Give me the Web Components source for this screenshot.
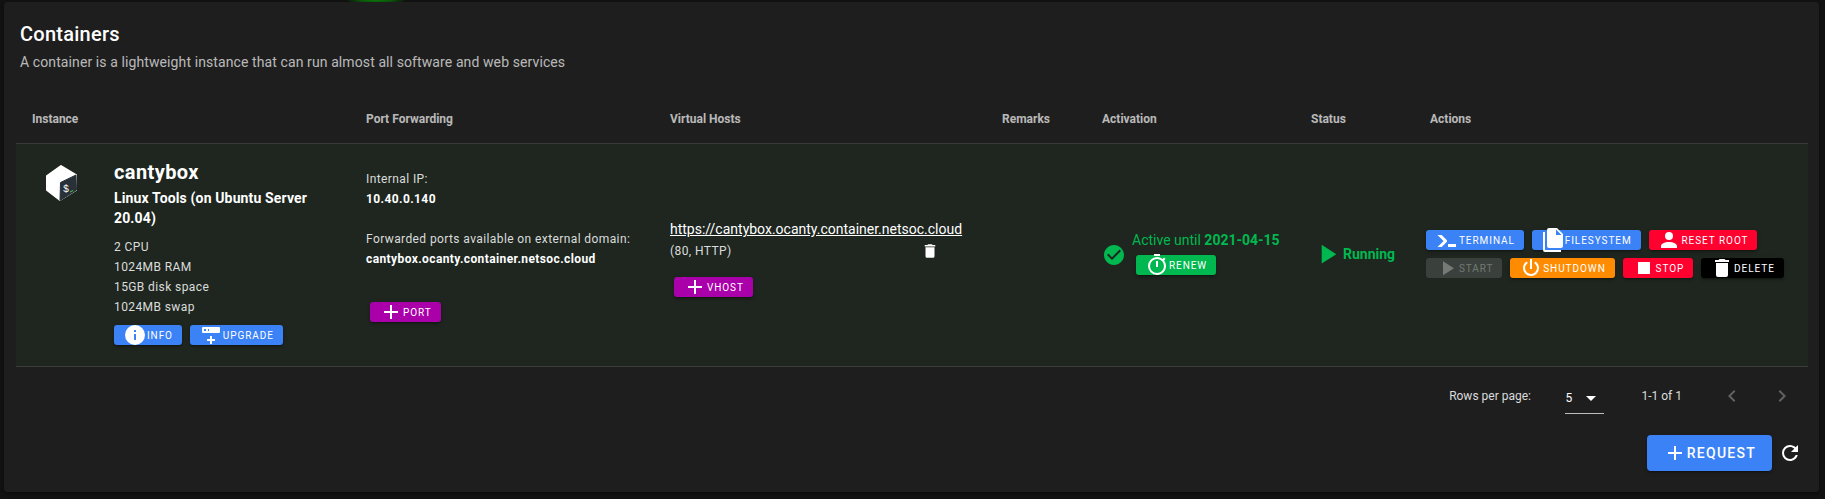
<!DOCTYPE html>
<html>
<head>
<meta charset="utf-8">
<title>Containers</title>
<style>
html, body { margin: 0; height: 499px; overflow: hidden; }
body {
    background: radial-gradient(ellipse 30px 5px at 376px 0, #0b7a0b 0, #0b5a0b 50%, transparent 100%), #121212;
    font-family: Roboto, "Liberation Sans", sans-serif;
    color: #fff;
}
</style>
</head>
<body>
<containers-page></containers-page>

<script>
const ICONS = {
    plus: "M19,13H13V19H11V13H5V11H11V5H13V11H19V13Z",
    info: "M13,9H11V7H13M13,17H11V11H13M12,2A10,10 0 0,0 2,12A10,10 0 0,0 12,22A10,10 0 0,0 22,12A10,10 0 0,0 12,2Z",
    upgrade: "M4,4H20A1,1 0 0,1 21,5V9A1,1 0 0,1 20,10H4A1,1 0 0,1 3,9V5A1,1 0 0,1 4,4M9,8H10V6H9V8M5,6V8H7V6H5M8,16H11V13H13V16H16V18H13V21H11V18H8V16Z",
    trash: "M19,4H15.5L14.5,3H9.5L8.5,4H5V6H19M6,19A2,2 0 0,0 8,21H16A2,2 0 0,0 18,19V7H6V19Z",
    check: "M12 2C6.5 2 2 6.5 2 12S6.5 22 12 22 22 17.5 22 12 17.5 2 12 2M10 17L5 12L6.41 10.59L10 14.17L17.59 6.58L19 8L10 17Z",
    timer: "M12,20A7,7 0 0,1 5,13A7,7 0 0,1 12,6A7,7 0 0,1 19,13A7,7 0 0,1 12,20M19.03,7.39L20.45,5.97C20,5.46 19.55,5 19.04,4.56L17.62,6C16.07,4.74 14.12,4 12,4A9,9 0 0,0 3,13A9,9 0 0,0 12,22C17,22 21,17.97 21,13C21,10.88 20.26,8.93 19.03,7.39M11,14H13V8H11M15,1H9V3H15V1Z",
    play: "M8,5.14V19.14L19,12.14L8,5.14Z",
    terminal: "M13,19V16H21V19H13M8.5,13L2.47,7H6.71L11.67,11.95C12.25,12.54 12.25,13.5 11.67,14.07L6.74,19H2.5L8.5,13Z",
    files: "M15,7H20.5L15,1.5V7M8,0H16L22,6V18A2,2 0 0,1 20,20H8C6.89,20 6,19.1 6,18V2A2,2 0 0,1 8,0M4,4V22H20V24H4A2,2 0 0,1 2,22V4H4Z",
    account: "M12,4A4,4 0 0,1 16,8A4,4 0 0,1 12,12A4,4 0 0,1 8,8A4,4 0 0,1 12,4M12,14C16.42,14 20,15.79 20,18V20H4V18C4,15.79 7.58,14 12,14Z",
    power: "M16.56,5.44L15.11,6.89C16.84,7.94 18,9.83 18,12A6,6 0 0,1 12,18A6,6 0 0,1 6,12C6,9.83 7.16,7.94 8.88,6.88L7.44,5.44C5.36,6.88 4,9.28 4,12A8,8 0 0,0 12,20A8,8 0 0,0 20,12C20,9.28 18.64,6.88 16.56,5.44M13,3H11V13H13",
    stop: "M18,18H6V6H18V18Z",
    left: "M15.41,16.58L10.83,12L15.41,7.41L14,6L8,12L14,18L15.41,16.58Z",
    right: "M8.59,16.58L13.17,12L8.59,7.41L10,6L16,12L10,18L8.59,16.58Z",
    down: "M7,10L12,15L17,10H7Z",
    refresh: "M17.65,6.35C16.2,4.9 14.21,4 12,4A8,8 0 0,0 4,12A8,8 0 0,0 12,20C15.73,20 18.84,17.45 19.73,14H17.65C16.83,16.33 14.61,18 12,18A6,6 0 0,1 6,12A6,6 0 0,1 12,6C13.66,6 15.14,6.69 16.22,7.78L13,11H20V4L17.65,6.35Z"
}

class NcIcon extends HTMLElement{
    connectedCallback(){
        const size = this.getAttribute("size") || 24
        const shadow = this.attachShadow({mode: "open"})
        shadow.innerHTML = `
        <style>
        :host{ display: inline-flex; flex: none; width: ${size}px; height: ${size}px; color: inherit }
        svg{ display: block; width: 100%; height: 100%; fill: currentColor; overflow: visible }
        </style>
        <svg viewBox="0 0 24 24"><path d="${ICONS[this.getAttribute("name")]}"/></svg>`
    }
}
customElements.define("nc-icon", NcIcon)

const BTN_COLORS = {
    blue: "#3b82f6", purple: "#a900a9", green: "#00b84f", red: "#ff002f",
    orange: "#ff8c00", black: "#000", off: "#3a413c"
}

class NcBtn extends HTMLElement{
    connectedCallback(){
        const big = this.hasAttribute("big")
        const off = this.getAttribute("color") === "off"
        const icon = this.getAttribute("icon")
        const shadow = this.attachShadow({mode: "open"})
        shadow.innerHTML = `
        <style>
        :host{
            display: inline-flex;
            align-items: center;
            flex: none;
            box-sizing: border-box;
            height: ${big ? 36 : 20}px;
            padding: 0 ${big ? 16 : 8.9}px;
            border-radius: ${big ? 4 : 3}px;
            background: ${BTN_COLORS[this.getAttribute("color")]};
            color: ${off ? "rgba(255,255,255,.3)" : "#fff"};
            font: ${big ? 500 : 400} ${big ? 14 : 10}px Roboto, sans-serif;
            letter-spacing: ${big ? ".0892857em" : ".095em"};
            text-transform: uppercase;
            white-space: nowrap;
            box-shadow: ${off ? "none" : "0 3px 1px -2px rgba(0,0,0,.2), 0 2px 2px 0 rgba(0,0,0,.14), 0 1px 5px 0 rgba(0,0,0,.12)"};
        }
        </style>
        ${icon ? `<nc-icon name="${icon}"></nc-icon>` : ""}<slot></slot>`
    }
}
customElements.define("nc-btn", NcBtn)

class InstanceCell extends HTMLElement{
    constructor(){
        super()
        const shadow = this.attachShadow({mode: "open"})
        shadow.innerHTML = `
        <style>
        :host{ display: flex; padding: 12px 16px 20px 30px; box-sizing: border-box }
        .logo{ flex: none; width: 68px; padding-top: 9px }
        .logo svg{ display: block }
        .name{ font-size: 20px; font-weight: 700; line-height: 32px; letter-spacing: .02em }
        .kind{ font-size: 14px; font-weight: 700; line-height: 20px; width: 204px; letter-spacing: .01em }
        .specs{ margin-top: 9px; font-size: 12px; line-height: 20px; letter-spacing: .0333em; color: rgba(255,255,255,.85) }
        .btns{ display: flex; gap: 8px; margin-top: 8px }
        </style>
        <div class="logo">
            <svg width="32" height="36" viewBox="0 0 32 36">
                <polygon points="15,1 1,11 1,25 14,35 30,25 30,10" fill="#fff" stroke="#fff" stroke-linejoin="round" stroke-width="2"/>
                <polygon points="14.5,17.5 30,10 30.5,25 14,35.5" fill="#293138" stroke="#293138" stroke-linejoin="round" stroke-width="1"/>
                <text x="17" y="27" font-family="Liberation Mono, monospace" font-size="10" fill="#fff">$</text>
                <line x1="24" y1="27" x2="27" y2="25.5" stroke="#3bb34a" stroke-width="1.2"/>
            </svg>
        </div>
        <div>
            <div class="name">cantybox</div>
            <div class="kind">Linux Tools (on Ubuntu Server 20.04)</div>
            <div class="specs">2 CPU<br>1024MB RAM<br>15GB disk space<br>1024MB swap</div>
            <div class="btns">
                <nc-btn color="blue" icon="info">Info</nc-btn>
                <nc-btn color="blue" icon="upgrade">Upgrade</nc-btn>
            </div>
        </div>`
    }
}
customElements.define("instance-cell", InstanceCell)

class PortsCell extends HTMLElement{
    constructor(){
        super()
        const shadow = this.attachShadow({mode: "open"})
        shadow.innerHTML = `
        <style>
        :host{ display: block; padding: 25px 16px 0; font-size: 12px; line-height: 20px; letter-spacing: .0333em; color: rgba(255,255,255,.85) }
        b{ display: block; font-weight: 700; color: #fff }
        p{ margin: 0 0 20px }
        nc-btn{ margin: 13px 0 0 4px }
        </style>
        <p>Internal IP:<b>10.40.0.140</b></p>
        <p>Forwarded ports available on external domain:<b>cantybox.ocanty.container.netsoc.cloud</b></p>
        <nc-btn color="purple" icon="plus">Port</nc-btn>`
    }
}
customElements.define("ports-cell", PortsCell)

class VhostsCell extends HTMLElement{
    constructor(){
        super()
        const shadow = this.attachShadow({mode: "open"})
        shadow.innerHTML = `
        <style>
        :host{ display: block; padding: 75px 16px 0 }
        a{ display: block; font-size: 14px; line-height: 20px; color: #fff; text-decoration: underline; white-space: nowrap }
        .sub{ display: flex; align-items: center; justify-content: space-between; width: 292px; height: 24px; padding-right: 23px; box-sizing: border-box; font-size: 12px; letter-spacing: .0333em; color: rgba(255,255,255,.85) }
        .sub nc-icon{ color: #fff }
        nc-btn{ margin: 14px 0 0 4px }
        </style>
        <a href="#">https://cantybox.ocanty.container.netsoc.cloud</a>
        <div class="sub"><span>(80, HTTP)</span><nc-icon name="trash" size="18"></nc-icon></div>
        <nc-btn color="purple" icon="plus">vhost</nc-btn>`
    }
}
customElements.define("vhosts-cell", VhostsCell)

class ActivationCell extends HTMLElement{
    constructor(){
        super()
        const shadow = this.attachShadow({mode: "open"})
        shadow.innerHTML = `
        <style>
        :host{ display: flex; align-items: center; padding-left: 16px; color: #00b84f; font-size: 14px }
        .txt{ margin-left: 6px }
        .line{ line-height: 20px; white-space: nowrap; margin-bottom: 5px }
        b{ font-weight: 700 }
        nc-btn{ margin-left: 4px; display: inline-flex }
        </style>
        <nc-icon name="check"></nc-icon>
        <div class="txt">
            <div class="line">Active until <b>2021-04-15</b></div>
            <nc-btn color="green" icon="timer">Renew</nc-btn>
        </div>`
    }
}
customElements.define("activation-cell", ActivationCell)

class StatusCell extends HTMLElement{
    constructor(){
        super()
        const shadow = this.attachShadow({mode: "open"})
        shadow.innerHTML = `
        <style>
        :host{ display: flex; align-items: center; padding: 0 0 2px 16px; color: #00b84f; font-size: 14px; font-weight: 700 }
        </style>
        <nc-icon name="play" size="32"></nc-icon><span>Running</span>`
    }
}
customElements.define("status-cell", StatusCell)

class ActionsCell extends HTMLElement{
    constructor(){
        super()
        const shadow = this.attachShadow({mode: "open"})
        shadow.innerHTML = `
        <style>
        :host{ display: flex; flex-direction: column; justify-content: center; gap: 8px; padding: 0 0 2px 12px }
        div{ display: flex; gap: 8px }
        </style>
        <div>
            <nc-btn color="blue" icon="terminal">Terminal</nc-btn>
            <nc-btn color="blue" icon="files">Filesystem</nc-btn>
            <nc-btn color="red" icon="account">Reset Root</nc-btn>
        </div>
        <div>
            <nc-btn color="off" icon="play">Start</nc-btn>
            <nc-btn color="orange" icon="power">Shutdown</nc-btn>
            <nc-btn color="red" icon="stop">Stop</nc-btn>
            <nc-btn color="black" icon="trash">Delete</nc-btn>
        </div>`
    }
}
customElements.define("actions-cell", ActionsCell)

class ContainerTable extends HTMLElement{
    constructor(){
        super()
        const shadow = this.attachShadow({mode: "open"})
        shadow.innerHTML = `
        <style>
        :host{ display: block; margin: 0 11px 0 12px; --cols: 334px 304px 332px 100px 209px 119px 394px }
        .head, .row{ display: grid; grid-template-columns: var(--cols) }
        .head{ height: 48px; align-items: center; border-bottom: 1px solid rgba(255,255,255,.12); font-size: 12px; font-weight: 700; color: rgba(255,255,255,.7) }
        .head span{ padding-left: 16px }
        .row{ height: 222px; background: #1e261f; border-bottom: 1px solid rgba(255,255,255,.12) }
        </style>
        <div class="head">
            <span>Instance</span><span>Port Forwarding</span><span>Virtual Hosts</span><span>Remarks</span><span>Activation</span><span>Status</span><span>Actions</span>
        </div>
        <div class="row">
            <instance-cell></instance-cell>
            <ports-cell></ports-cell>
            <vhosts-cell></vhosts-cell>
            <div></div>
            <activation-cell></activation-cell>
            <status-cell></status-cell>
            <actions-cell></actions-cell>
        </div>`
    }
}
customElements.define("container-table", ContainerTable)

class TablePager extends HTMLElement{
    constructor(){
        super()
        const shadow = this.attachShadow({mode: "open"})
        shadow.innerHTML = `
        <style>
        :host{ display: flex; align-items: center; height: 57px; margin-right: 11px; font-size: 12px; color: rgba(255,255,255,.85) }
        .label{ margin-left: auto }
        .select{ display: flex; align-items: center; justify-content: space-between; box-sizing: border-box; width: 39px; height: 32px; margin-left: 34.5px; margin-top: 5px; border-bottom: 1px solid rgba(255,255,255,.7); color: #fff }
        .select nc-icon{ margin-right: 1px }
        .range{ margin-left: 37px }
        .nav{ color: rgba(255,255,255,.3); margin-left: 38px }
        .nav + .nav{ margin-left: 26px; margin-right: 14px }
        </style>
        <span class="label">Rows per page:</span>
        <div class="select"><span>5</span><nc-icon name="down"></nc-icon></div>
        <span class="range">1-1 of 1</span>
        <nc-icon class="nav" name="left"></nc-icon>
        <nc-icon class="nav" name="right"></nc-icon>`
    }
}
customElements.define("table-pager", TablePager)

class ContainersPage extends HTMLElement{
    constructor(){
        super()
        const shadow = this.attachShadow({mode: "open"})
        shadow.innerHTML = `
        <style>
        :host{ display: block; box-sizing: border-box; height: 490px; margin: 2px 6px 0 4px; background: #1e1e1e; border-radius: 4px; box-shadow: 0 2px 4px rgba(0,0,0,.4) }
        header{ padding: 20px 16px 0; height: 93px; box-sizing: border-box }
        h1{ margin: 0; font-size: 20px; font-weight: 500; line-height: 24px; letter-spacing: .0125em }
        p{ margin: 6px 0 0; font-size: 14px; line-height: 20px; letter-spacing: .00714em; color: rgba(255,255,255,.7) }
        footer{ display: flex; align-items: center; justify-content: flex-end; margin-top: 11px; padding-right: 17px; gap: 6px }
        </style>
        <header>
            <h1>Containers</h1>
            <p>A container is a lightweight instance that can run almost all software and web services</p>
        </header>
        <container-table></container-table>
        <table-pager></table-pager>
        <footer>
            <nc-btn color="blue" icon="plus" big>Request</nc-btn>
            <nc-icon name="refresh"></nc-icon>
        </footer>`
    }
}
customElements.define("containers-page", ContainersPage)
</script>
</body>
</html>
